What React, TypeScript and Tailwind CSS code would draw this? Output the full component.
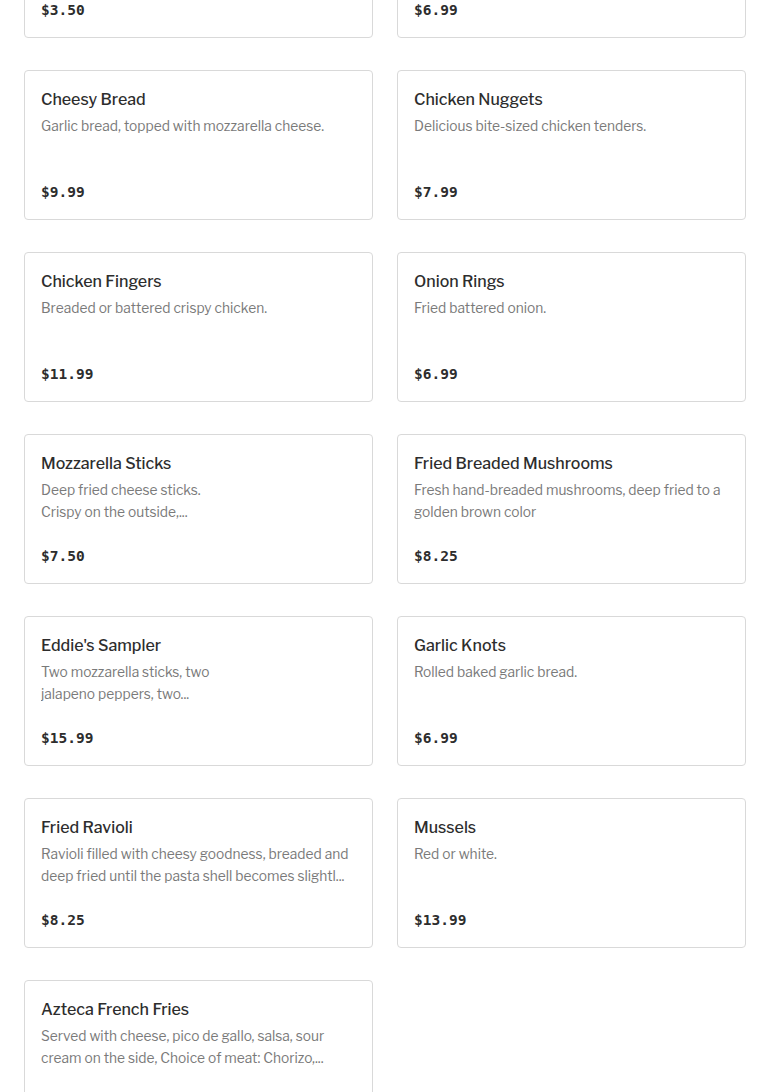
const items = [
  { name: 'Garden Salad', desc: ['Fresh greens, tomato, cucumber and onion.'], price: '$3.50' },
  { name: 'French Fries', desc: ['Crispy golden fries.'], price: '$6.99' },
  { name: 'Cheesy Bread', desc: ['Garlic bread, topped with mozzarella cheese.'], price: '$9.99' },
  { name: 'Chicken Nuggets', desc: ['Delicious bite-sized chicken tenders.'], price: '$7.99' },
  { name: 'Chicken Fingers', desc: ['Breaded or battered crispy chicken.'], price: '$11.99' },
  { name: 'Onion Rings', desc: ['Fried battered onion.'], price: '$6.99' },
  { name: 'Mozzarella Sticks', desc: ['Deep fried cheese sticks.', 'Crispy on the outside,...'], price: '$7.50' },
  {
    name: 'Fried Breaded Mushrooms',
    desc: ['Fresh hand-breaded mushrooms, deep fried to a', 'golden brown color'],
    price: '$8.25',
  },
  { name: "Eddie's Sampler", desc: ['Two mozzarella sticks, two', 'jalapeno peppers, two...'], price: '$15.99' },
  { name: 'Garlic Knots', desc: ['Rolled baked garlic bread.'], price: '$6.99' },
  {
    name: 'Fried Ravioli',
    desc: ['Ravioli filled with cheesy goodness, breaded and', 'deep fried until the pasta shell becomes slightl...'],
    price: '$8.25',
  },
  { name: 'Mussels', desc: ['Red or white.'], price: '$13.99' },
  {
    name: 'Azteca French Fries',
    desc: ['Served with cheese, pico de gallo, salsa, sour', 'cream on the side, Choice of meat: Chorizo,...'],
    price: '$12.99',
  },
];

function MenuCard({ item }: { item: (typeof items)[number] }) {
  return (
    <div className="flex h-[150px] flex-col rounded-[4px] border border-[#d9d9d9] bg-white p-4">
      <h3 className="h-[28px] text-[16px] font-medium leading-[25px] text-[#2d2d2d]">{item.name}</h3>
      <div className="h-[44px] text-[13.75px] leading-[22px] text-[#7a7a7a]">
        {item.desc.map((line) => (
          <p key={line} className="truncate">
            {line}
          </p>
        ))}
      </div>
      <p
        className="mt-auto text-[14.5px] font-bold leading-[22px] text-[#2d2d2d]"
        style={{ fontFamily: '"DejaVu Sans Mono", "Liberation Mono", monospace' }}
      >
        {item.price}
      </p>
    </div>
  );
}

export default function App() {
  return (
    <div
      className="min-h-screen overflow-hidden bg-white px-6"
      style={{ fontFamily: '"Libre Franklin", "Inter", "Liberation Sans", sans-serif' }}
    >
      <div className="-mt-[112px] grid grid-cols-2 gap-x-6 gap-y-8">
        {items.map((item) => (
          <MenuCard key={item.name} item={item} />
        ))}
      </div>
    </div>
  );
}
